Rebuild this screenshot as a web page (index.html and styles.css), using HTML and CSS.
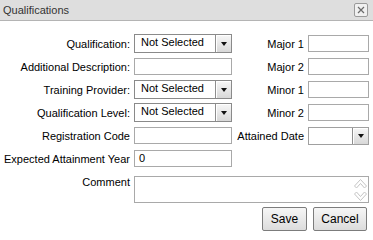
FILE: index.html
```html
<!DOCTYPE html>
<html>
<head>
<meta charset="utf-8">
<link rel="stylesheet" href="styles.css">
</head>
<body>
<div class="dialog">
  <div class="titlebar">
    <span class="title">Qualifications</span>
    <span class="close"><svg width="8" height="8" viewBox="0 0 8 8"><path d="M1 1L7 7M7 1L1 7" stroke="#6a6a6a" stroke-width="1.2" fill="none"/></svg></span>
  </div>
  <div class="form">
    <label class="lbl">Qualification:</label>
    <div class="select"><span class="val">Not Selected</span><span class="arrow"><i class="tri"></i></span></div>
    <label class="lbl">Major 1</label>
    <div class="text"></div>

    <label class="lbl">Additional Description:</label>
    <div class="text"></div>
    <label class="lbl">Major 2</label>
    <div class="text"></div>

    <label class="lbl">Training Provider:</label>
    <div class="select"><span class="val">Not Selected</span><span class="arrow"><i class="tri"></i></span></div>
    <label class="lbl">Minor 1</label>
    <div class="text"></div>

    <label class="lbl">Qualification Level:</label>
    <div class="select"><span class="val">Not Selected</span><span class="arrow"><i class="tri"></i></span></div>
    <label class="lbl">Minor 2</label>
    <div class="text"></div>

    <label class="lbl">Registration Code</label>
    <div class="text"></div>
    <label class="lbl">Attained Date</label>
    <div class="select date"><span class="val"></span><span class="arrow"><i class="tri"></i></span></div>

    <label class="lbl">Expected Attainment Year</label>
    <div class="text"><span class="tval">0</span></div>
    <span></span>
    <span></span>

    <label class="lbl top">Comment</label>
    <div class="area">
      <svg class="spin" width="13" height="24" viewBox="0 0 13 24">
        <path d="M0.5 8L6.5 1.5L12.5 8L10.5 10L6.5 5.5L2.5 10Z" fill="#fff" stroke="#c4c4c4" stroke-width="1"/>
        <path d="M0.5 16L6.5 22.5L12.5 16L10.5 14L6.5 18.5L2.5 14Z" fill="#fff" stroke="#c4c4c4" stroke-width="1"/>
      </svg>
    </div>

    <div class="buttons">
      <button class="btn save">Save</button>
      <button class="btn cancel">Cancel</button>
    </div>
  </div>
</div>
</body>
</html>
```
FILE: styles.css
```css
html, body {
  margin: 0;
  padding: 0;
  background: #fff;
}
body {
  font-family: "Liberation Sans", Arial, sans-serif;
  font-size: 11px;
  color: #000;
}
.dialog {
  width: 373px;
  height: 235px;
  background: #fff;
}
.titlebar {
  height: 20px;
  background: #dedede;
  border-bottom: 1px solid #b4b4b4;
  display: flex;
  align-items: center;
  justify-content: space-between;
  padding: 0 5px 0 3px;
}
.title {
  font-size: 11px;
  color: #333;
}
.close {
  width: 12px;
  height: 12px;
  border: 1px solid #9a9a9a;
  border-radius: 2px;
  background: #f0f0f0;
  display: flex;
  align-items: center;
  justify-content: center;
}
.close svg { display: block; }
.form {
  display: grid;
  grid-template-columns: 134px 98px 76px 61px;
  grid-template-rows: repeat(6, 23px) auto auto;
  align-items: center;
  margin-top: 11px;
}
.lbl {
  text-align: right;
  padding-right: 4px;
  white-space: nowrap;
  line-height: 13px;
  padding-top: 1px;
}
.lbl.top {
  align-self: start;
  margin-top: 5px;
}
.text {
  box-sizing: border-box;
  height: 17px;
  border: 1px solid #a9a9a9;
  background: #fff;
  display: flex;
  align-items: center;
}
.tval {
  padding-left: 4px;
  line-height: 13px;
}
.select {
  box-sizing: border-box;
  height: 19px;
  border: 1px solid #8a8a8a;
  background: #fff;
  display: flex;
}
.val {
  flex: 1;
  padding-left: 6px;
  line-height: 15px;
  font-size: 11px;
}
.arrow {
  width: 16px;
  box-sizing: border-box;
  border-left: 1px solid #8e8e8e;
  background: linear-gradient(#f7f7f7, #d8d8d8);
  box-shadow: inset 1px 1px 0 #fff;
  display: flex;
  align-items: center;
  justify-content: center;
}
.tri {
  width: 0;
  height: 0;
  border-left: 3.5px solid transparent;
  border-right: 3.5px solid transparent;
  border-top: 4px solid #111;
}
.date {
  height: 18px;
  border-color: #a0a0a0;
}
.area {
  grid-column: 2 / 5;
  box-sizing: border-box;
  height: 27px;
  margin-top: 6px;
  border: 1px solid #a9a9a9;
  display: flex;
  justify-content: flex-end;
  align-items: center;
  padding-right: 1px;
}
.spin { display: block; }
.buttons {
  grid-column: 1 / -1;
  display: flex;
  justify-content: flex-end;
  gap: 6px;
  margin-top: 4px;
  padding-right: 2px;
}
.btn {
  box-sizing: border-box;
  height: 24px;
  border: 1px solid #7c7c7c;
  border-radius: 2px;
  background: linear-gradient(#f6f6f6, #dcdcdc);
  font-family: "Liberation Sans", Arial, sans-serif;
  font-size: 12px;
  color: #000;
  padding: 0;
}
.save { width: 45px; }
.cancel { width: 54px; }
```
